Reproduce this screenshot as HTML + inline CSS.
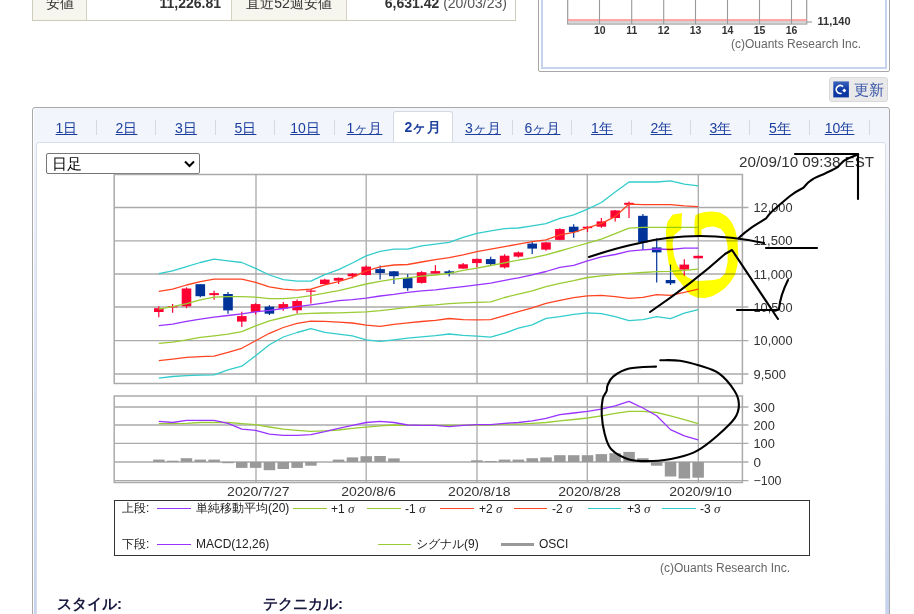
<!DOCTYPE html>
<html lang="ja">
<head>
<meta charset="utf-8">
<style>
html,body{margin:0;padding:0;background:#fff;}
body{width:914px;height:614px;position:relative;overflow:hidden;font-family:"Liberation Sans",sans-serif;color:#333;}
.abs{position:absolute;}
/* top table */
#tbl{left:32px;top:-19px;width:484px;height:40px;border-left:1px solid #cfcbb9;border-bottom:1px solid #cfcbb9;border-right:1px solid #cfcbb9;box-sizing:border-box;}
.th{position:absolute;top:0;height:39px;background:#f7f6ee;border-right:1px solid #d6d2c2;box-sizing:border-box;font-size:14px;line-height:14px;text-align:center;}
.td{position:absolute;top:0;height:39px;border-right:1px solid #d6d2c2;box-sizing:border-box;font-size:14px;line-height:14px;text-align:right;}
/* mini box */
#mini{left:538px;top:-10px;width:352px;height:82px;border:1px solid #a8a8a8;box-sizing:border-box;border-radius:2px;}
#mini .in{position:absolute;left:2px;top:0;right:2px;bottom:2px;border:2px solid #c6d3ee;border-top:none;}
/* update button */
#upd{left:829px;top:77px;width:59px;height:25px;background:#e9e9e9;border:1px solid #d9d9d9;box-sizing:border-box;border-radius:3px;}
/* main panel */
#panel{left:32px;top:107px;width:858px;height:540px;border:1px solid #a9a9a9;box-sizing:border-box;border-radius:3px;background:linear-gradient(to bottom,#f2f5fb 0px,#f2f5fb 35px,#e4eaf8 150px,#c7d4ef 500px);box-shadow:inset 1px 0 0 #fff;}
#inner{left:36px;top:142px;width:850px;height:520px;border:1px solid #d9dfea;box-sizing:border-box;border-radius:3px;background:#fff;}
.tab{position:absolute;top:111px;height:31px;font-size:14px;color:#1c3f9e;text-align:center;}
.tab span{text-decoration:underline;text-underline-offset:1px;}
.sep{position:absolute;top:120px;width:1px;height:15px;background:#d5d9e2;}
#act{left:393px;top:111px;width:60px;height:32px;background:#fff;border:1px solid #d5d9e2;border-bottom:none;box-sizing:border-box;border-radius:3px 3px 0 0;}
#sel{left:46px;top:153px;width:154px;height:21px;border:1px solid #767676;box-sizing:border-box;border-radius:2px;background:#fff;font-size:15px;line-height:19px;color:#000;}
.ax{font-family:"Liberation Sans",sans-serif;font-size:12.5px;fill:#333;}
.lg{position:absolute;font-size:12px;line-height:13px;color:#222;white-space:nowrap;}
.lg i{font-family:"Liberation Serif",serif;font-size:13px;}
.ll{position:absolute;height:1.5px;}
</style>
</head>
<body>
<!-- top table -->
<div id="tbl" class="abs">
  <div class="th" style="left:0;width:54px;"><div style="position:absolute;left:0;right:0;top:15px;">安値</div></div>
  <div class="td" style="left:54px;width:145px;"><div style="position:absolute;right:10px;top:15px;font-weight:bold;">11,226.81</div></div>
  <div class="th" style="left:199px;width:115px;"><div style="position:absolute;left:0;right:0;top:15px;">直近52週安値</div></div>
  <div class="td" style="left:314px;width:169px;border-right:none;"><div style="position:absolute;right:9px;top:15px;"><b>6,631.42</b> <span style="color:#555;">(20/03/23)</span></div></div>
</div>

<!-- mini chart box -->
<div id="mini" class="abs"><div class="in"></div></div>
<svg class="abs" style="left:0;top:0;" width="914" height="110">
  <rect x="567.7" y="-5" width="239" height="29" fill="#fff" stroke="#999" stroke-width="1.2"/>
  <rect x="568.3" y="20.8" width="238" height="2" fill="#cfcfcf"/>
  <line x1="567.7" y1="20" x2="806.7" y2="20" stroke="#ff8a8a" stroke-width="1.5"/>
  <g stroke="#999" stroke-width="1.1">
    <line x1="599.5" y1="-5" x2="599.5" y2="24"/><line x1="631.7" y1="-5" x2="631.7" y2="24"/><line x1="663.7" y1="-5" x2="663.7" y2="24"/>
    <line x1="695.5" y1="-5" x2="695.5" y2="24"/><line x1="727.5" y1="-5" x2="727.5" y2="24"/><line x1="759.5" y1="-5" x2="759.5" y2="24"/><line x1="791.5" y1="-5" x2="791.5" y2="24"/>
    <line x1="806.7" y1="22" x2="812" y2="22"/>
  </g>
  <g font-family="Liberation Sans" font-size="10.5" font-weight="bold" fill="#333" text-anchor="middle">
    <text x="599.8" y="34">10</text><text x="631.7" y="34">11</text><text x="663.7" y="34">12</text><text x="695.5" y="34">13</text><text x="727.5" y="34">14</text><text x="759.5" y="34">15</text><text x="791.5" y="34">16</text>
  </g>
  <text x="817.5" y="25" font-family="Liberation Sans" font-size="11" font-weight="bold" fill="#333">11,140</text>
  <text x="731" y="48" font-family="Liberation Sans" font-size="12" fill="#666">(c)Ouants Research Inc.</text>
</svg>

<!-- update button -->
<div id="upd" class="abs">
  <svg class="abs" style="left:3px;top:3px;" width="17" height="17">
    <defs><linearGradient id="ig" x1="0" y1="0" x2="0" y2="1"><stop offset="0" stop-color="#3d64bb"/><stop offset="0.5" stop-color="#0d3aa6"/><stop offset="1" stop-color="#0a35a0"/></linearGradient></defs>
    <rect x="0.3" y="0.4" width="15.6" height="16" fill="url(#ig)"/>
    <path d="M10.1 5.6 A4 4 0 1 0 8.7 12.2" fill="none" stroke="#fff" stroke-width="1.6"/>
    <path d="M11.3 7.6 L13.4 9.6 L11.3 11.6 L9.2 9.6 Z" fill="#fff"/>
  </svg>
  <div class="abs" style="left:24px;top:3px;font-size:15px;line-height:17px;color:#3a56a8;">更新</div>
</div>

<!-- main panel -->
<div id="panel" class="abs"></div>
<div id="act" class="abs"></div>
<div class="tab" style="left:37px;width:59px;"><span style="position:relative;top:9px;">1日</span></div>
<div class="tab" style="left:97px;width:59px;"><span style="position:relative;top:9px;">2日</span></div>
<div class="tab" style="left:156px;width:60px;"><span style="position:relative;top:9px;">3日</span></div>
<div class="tab" style="left:216px;width:59px;"><span style="position:relative;top:9px;">5日</span></div>
<div class="tab" style="left:275px;width:60px;"><span style="position:relative;top:9px;">10日</span></div>
<div class="tab" style="left:335px;width:59px;"><span style="position:relative;top:9px;">1ヶ月</span></div>
<div class="tab" style="left:394px;width:59px;"><b style="position:relative;top:8px;left:-0.5px;">2ヶ<span style="text-decoration:none;margin-left:1px;">月</span></b></div>
<div class="tab" style="left:453px;width:60px;"><span style="position:relative;top:9px;">3ヶ月</span></div>
<div class="tab" style="left:513px;width:59px;"><span style="position:relative;top:9px;">6ヶ月</span></div>
<div class="tab" style="left:572px;width:60px;"><span style="position:relative;top:9px;">1年</span></div>
<div class="tab" style="left:632px;width:59px;"><span style="position:relative;top:9px;">2年</span></div>
<div class="tab" style="left:691px;width:59px;"><span style="position:relative;top:9px;">3年</span></div>
<div class="tab" style="left:750px;width:60px;"><span style="position:relative;top:9px;">5年</span></div>
<div class="tab" style="left:810px;width:59px;"><span style="position:relative;top:9px;">10年</span></div>
<div class="sep" style="left:96px;"></div><div class="sep" style="left:155px;"></div><div class="sep" style="left:215px;"></div>
<div class="sep" style="left:274px;"></div><div class="sep" style="left:334px;"></div>
<div class="sep" style="left:512px;"></div><div class="sep" style="left:571px;"></div><div class="sep" style="left:631px;"></div>
<div class="sep" style="left:690px;"></div><div class="sep" style="left:749px;"></div><div class="sep" style="left:809px;"></div><div class="sep" style="left:869px;"></div>

<div id="inner" class="abs"></div>

<div id="sel" class="abs"><span style="position:absolute;left:5px;top:0;">日足</span>
  <svg class="abs" style="left:137px;top:6px;" width="11" height="8"><path d="M1 1.5 L5.5 6 L10 1.5" fill="none" stroke="#000" stroke-width="2"/></svg>
</div>
<div class="abs" style="left:739px;top:153px;font-size:15.2px;line-height:17px;color:#333;">20/09/10 09:38 EST</div>

<svg class="abs" style="left:0;top:0;" width="914" height="614">
<rect x="114.2" y="174.5" width="628.1999999999999" height="209.0" fill="#fff" stroke="#aaaaaa" stroke-width="1.5"/>
<line x1="114.2" y1="207.5" x2="748.4" y2="207.5" stroke="#aaaaaa" stroke-width="1.3"/>
<line x1="114.2" y1="240.8" x2="748.4" y2="240.8" stroke="#aaaaaa" stroke-width="1.3"/>
<line x1="114.2" y1="274.0" x2="748.4" y2="274.0" stroke="#aaaaaa" stroke-width="1.3"/>
<line x1="114.2" y1="307.0" x2="748.4" y2="307.0" stroke="#aaaaaa" stroke-width="1.3"/>
<line x1="114.2" y1="340.6" x2="748.4" y2="340.6" stroke="#aaaaaa" stroke-width="1.3"/>
<line x1="114.2" y1="374.0" x2="748.4" y2="374.0" stroke="#aaaaaa" stroke-width="1.3"/>
<line x1="256" y1="174.5" x2="256" y2="383.5" stroke="#aaaaaa" stroke-width="1.3"/>
<line x1="366.2" y1="174.5" x2="366.2" y2="383.5" stroke="#aaaaaa" stroke-width="1.3"/>
<line x1="477" y1="174.5" x2="477" y2="383.5" stroke="#aaaaaa" stroke-width="1.3"/>
<line x1="587.3" y1="174.5" x2="587.3" y2="383.5" stroke="#aaaaaa" stroke-width="1.3"/>
<line x1="698.3" y1="174.5" x2="698.3" y2="383.5" stroke="#aaaaaa" stroke-width="1.3"/>
<rect x="114.2" y="396.0" width="628.1999999999999" height="86.5" fill="#fff" stroke="#aaaaaa" stroke-width="1.5"/>
<line x1="114.2" y1="407.0" x2="748.4" y2="407.0" stroke="#aaaaaa" stroke-width="1.3"/>
<line x1="114.2" y1="425.0" x2="748.4" y2="425.0" stroke="#aaaaaa" stroke-width="1.3"/>
<line x1="114.2" y1="443.4" x2="748.4" y2="443.4" stroke="#aaaaaa" stroke-width="1.3"/>
<line x1="114.2" y1="462.0" x2="748.4" y2="462.0" stroke="#aaaaaa" stroke-width="1.3"/>
<line x1="114.2" y1="480.7" x2="748.4" y2="480.7" stroke="#aaaaaa" stroke-width="1.3"/>
<line x1="256" y1="396.0" x2="256" y2="482.5" stroke="#aaaaaa" stroke-width="1.3"/>
<line x1="366.2" y1="396.0" x2="366.2" y2="482.5" stroke="#aaaaaa" stroke-width="1.3"/>
<line x1="477" y1="396.0" x2="477" y2="482.5" stroke="#aaaaaa" stroke-width="1.3"/>
<line x1="587.3" y1="396.0" x2="587.3" y2="482.5" stroke="#aaaaaa" stroke-width="1.3"/>
<line x1="698.3" y1="396.0" x2="698.3" y2="482.5" stroke="#aaaaaa" stroke-width="1.3"/>
<line x1="158.8" y1="306.3" x2="158.8" y2="317.2" stroke="#ff0033" stroke-width="1.2"/>
<rect x="154.0" y="308.2" width="9.6" height="3.8" fill="#ff0033"/>
<line x1="172.6" y1="303.9" x2="172.6" y2="312.8" stroke="#ff0033" stroke-width="1.2"/>
<rect x="167.8" y="306.2" width="9.6" height="1.2" fill="#ff0033"/>
<line x1="186.5" y1="287.4" x2="186.5" y2="308.2" stroke="#ff0033" stroke-width="1.2"/>
<rect x="181.7" y="288.5" width="9.6" height="17.8" fill="#ff0033"/>
<line x1="200.3" y1="284.2" x2="200.3" y2="297.3" stroke="#003399" stroke-width="1.2"/>
<rect x="195.5" y="284.2" width="9.6" height="12.0" fill="#003399"/>
<line x1="214.1" y1="290.7" x2="214.1" y2="299.7" stroke="#ff0033" stroke-width="1.2"/>
<rect x="209.3" y="293.1" width="9.6" height="2.0" fill="#ff0033"/>
<line x1="228.0" y1="292.0" x2="228.0" y2="313.7" stroke="#003399" stroke-width="1.2"/>
<rect x="223.2" y="294.0" width="9.6" height="16.4" fill="#003399"/>
<line x1="241.8" y1="311.7" x2="241.8" y2="327.0" stroke="#ff0033" stroke-width="1.2"/>
<rect x="237.0" y="316.1" width="9.6" height="5.5" fill="#ff0033"/>
<line x1="255.6" y1="303.2" x2="255.6" y2="314.6" stroke="#ff0033" stroke-width="1.2"/>
<rect x="250.8" y="304.1" width="9.6" height="7.8" fill="#ff0033"/>
<line x1="269.4" y1="305.2" x2="269.4" y2="314.9" stroke="#003399" stroke-width="1.2"/>
<rect x="264.6" y="306.6" width="9.6" height="7.1" fill="#003399"/>
<line x1="283.3" y1="301.9" x2="283.3" y2="310.7" stroke="#ff0033" stroke-width="1.2"/>
<rect x="278.5" y="304.1" width="9.6" height="4.5" fill="#ff0033"/>
<line x1="297.1" y1="299.6" x2="297.1" y2="313.4" stroke="#ff0033" stroke-width="1.2"/>
<rect x="292.3" y="301.0" width="9.6" height="9.3" fill="#ff0033"/>
<line x1="310.9" y1="289.0" x2="310.9" y2="303.5" stroke="#ff0033" stroke-width="1.2"/>
<rect x="306.1" y="290.5" width="9.6" height="1.2" fill="#ff0033"/>
<line x1="324.8" y1="278.8" x2="324.8" y2="284.5" stroke="#ff0033" stroke-width="1.2"/>
<rect x="320.0" y="279.6" width="9.6" height="4.5" fill="#ff0033"/>
<line x1="338.6" y1="277.5" x2="338.6" y2="284.1" stroke="#ff0033" stroke-width="1.2"/>
<rect x="333.8" y="277.9" width="9.6" height="2.8" fill="#ff0033"/>
<line x1="352.4" y1="273.0" x2="352.4" y2="278.6" stroke="#ff0033" stroke-width="1.2"/>
<rect x="347.6" y="273.6" width="9.6" height="2.7" fill="#ff0033"/>
<line x1="366.2" y1="265.4" x2="366.2" y2="275.5" stroke="#ff0033" stroke-width="1.2"/>
<rect x="361.4" y="266.6" width="9.6" height="8.4" fill="#ff0033"/>
<line x1="380.1" y1="265.6" x2="380.1" y2="279.6" stroke="#003399" stroke-width="1.2"/>
<rect x="375.3" y="269.1" width="9.6" height="3.9" fill="#003399"/>
<line x1="393.9" y1="271.0" x2="393.9" y2="284.1" stroke="#003399" stroke-width="1.2"/>
<rect x="389.1" y="271.3" width="9.6" height="4.9" fill="#003399"/>
<line x1="407.7" y1="274.3" x2="407.7" y2="290.7" stroke="#003399" stroke-width="1.2"/>
<rect x="402.9" y="278.1" width="9.6" height="10.1" fill="#003399"/>
<line x1="421.6" y1="271.3" x2="421.6" y2="283.5" stroke="#ff0033" stroke-width="1.2"/>
<rect x="416.8" y="272.2" width="9.6" height="10.7" fill="#ff0033"/>
<line x1="435.4" y1="265.3" x2="435.4" y2="273.8" stroke="#ff0033" stroke-width="1.2"/>
<rect x="430.6" y="271.1" width="9.6" height="2.4" fill="#ff0033"/>
<line x1="449.2" y1="269.9" x2="449.2" y2="276.6" stroke="#003399" stroke-width="1.2"/>
<rect x="444.4" y="271.3" width="9.6" height="2.0" fill="#003399"/>
<line x1="463.1" y1="263.1" x2="463.1" y2="268.8" stroke="#ff0033" stroke-width="1.2"/>
<rect x="458.3" y="264.3" width="9.6" height="4.3" fill="#ff0033"/>
<line x1="476.9" y1="258.5" x2="476.9" y2="267.5" stroke="#ff0033" stroke-width="1.2"/>
<rect x="472.1" y="258.9" width="9.6" height="4.2" fill="#ff0033"/>
<line x1="490.7" y1="256.8" x2="490.7" y2="265.3" stroke="#003399" stroke-width="1.2"/>
<rect x="485.9" y="259.1" width="9.6" height="5.0" fill="#003399"/>
<line x1="504.6" y1="254.3" x2="504.6" y2="268.6" stroke="#ff0033" stroke-width="1.2"/>
<rect x="499.8" y="255.7" width="9.6" height="11.7" fill="#ff0033"/>
<line x1="518.4" y1="251.6" x2="518.4" y2="257.4" stroke="#ff0033" stroke-width="1.2"/>
<rect x="513.6" y="252.4" width="9.6" height="4.2" fill="#ff0033"/>
<line x1="532.2" y1="241.6" x2="532.2" y2="254.1" stroke="#003399" stroke-width="1.2"/>
<rect x="527.4" y="243.6" width="9.6" height="5.0" fill="#003399"/>
<line x1="546.0" y1="242.0" x2="546.0" y2="250.7" stroke="#ff0033" stroke-width="1.2"/>
<rect x="541.2" y="242.4" width="9.6" height="7.2" fill="#ff0033"/>
<line x1="559.9" y1="228.3" x2="559.9" y2="240.2" stroke="#ff0033" stroke-width="1.2"/>
<rect x="555.1" y="229.1" width="9.6" height="10.8" fill="#ff0033"/>
<line x1="573.7" y1="224.3" x2="573.7" y2="237.8" stroke="#003399" stroke-width="1.2"/>
<rect x="568.9" y="226.7" width="9.6" height="5.4" fill="#003399"/>
<line x1="587.5" y1="226.2" x2="587.5" y2="232.1" stroke="#ff0033" stroke-width="1.2"/>
<rect x="582.7" y="226.7" width="9.6" height="1.5" fill="#ff0033"/>
<line x1="601.4" y1="218.0" x2="601.4" y2="227.7" stroke="#ff0033" stroke-width="1.2"/>
<rect x="596.6" y="221.4" width="9.6" height="5.3" fill="#ff0033"/>
<line x1="615.2" y1="210.0" x2="615.2" y2="221.4" stroke="#ff0033" stroke-width="1.2"/>
<rect x="610.4" y="210.4" width="9.6" height="7.6" fill="#ff0033"/>
<line x1="629.0" y1="201.6" x2="629.0" y2="218.0" stroke="#ff0033" stroke-width="1.2"/>
<rect x="624.2" y="202.8" width="9.6" height="2.0" fill="#ff0033"/>
<line x1="642.9" y1="214.1" x2="642.9" y2="249.9" stroke="#003399" stroke-width="1.2"/>
<rect x="638.1" y="215.8" width="9.6" height="26.6" fill="#003399"/>
<line x1="656.7" y1="238.2" x2="656.7" y2="282.4" stroke="#003399" stroke-width="1.2"/>
<rect x="651.9" y="247.4" width="9.6" height="5.0" fill="#003399"/>
<line x1="670.5" y1="264.6" x2="670.5" y2="285.0" stroke="#003399" stroke-width="1.2"/>
<rect x="665.7" y="280.0" width="9.6" height="3.3" fill="#003399"/>
<line x1="684.3" y1="259.2" x2="684.3" y2="275.8" stroke="#ff0033" stroke-width="1.2"/>
<rect x="679.5" y="264.6" width="9.6" height="5.0" fill="#ff0033"/>
<line x1="698.2" y1="255.8" x2="698.2" y2="258.3" stroke="#ff0033" stroke-width="1.2"/>
<rect x="693.4" y="255.8" width="9.6" height="2.5" fill="#ff0033"/>
<polyline points="158.8,273.6 172.6,270.8 186.5,266.6 200.3,262.5 214.1,259.2 228.0,260.8 241.8,262.5 255.6,268.3 269.4,275.0 283.3,279.6 297.1,281.2 310.9,281.2 324.8,274.6 338.6,269.6 352.4,263.0 366.2,255.8 380.1,251.3 393.9,249.1 407.7,249.1 421.6,245.8 435.4,244.1 449.2,242.4 463.1,237.4 476.9,233.3 490.7,230.8 504.6,228.6 518.4,228.0 532.2,225.8 546.0,223.6 559.9,218.3 573.7,214.9 587.5,209.1 601.4,202.5 615.2,192.0 629.0,182.0 642.9,182.0 656.7,182.0 670.5,180.8 684.3,184.2 698.2,185.8" fill="none" stroke="#33cccc" stroke-width="1.3" stroke-linejoin="round"/>
<polyline points="158.8,378.2 172.6,376.5 186.5,375.7 200.3,375.2 214.1,374.9 228.0,369.9 241.8,366.2 255.6,355.7 269.4,344.8 283.3,337.0 297.1,332.5 310.9,328.6 324.8,332.4 338.6,334.1 352.4,335.8 366.2,339.9 380.1,341.4 393.9,339.9 407.7,338.2 421.6,336.9 435.4,335.7 449.2,334.0 463.1,335.4 476.9,336.1 490.7,337.1 504.6,333.2 518.4,328.2 532.2,324.9 546.0,318.3 559.9,316.6 573.7,314.3 587.5,312.9 601.4,313.6 615.2,316.6 629.0,320.7 642.9,319.6 656.7,316.6 670.5,318.6 684.3,313.2 698.2,309.6" fill="none" stroke="#33cccc" stroke-width="1.3" stroke-linejoin="round"/>
<polyline points="158.8,291.3 172.6,289.1 186.5,285.0 200.3,281.6 214.1,279.1 228.0,279.1 241.8,279.1 255.6,282.4 269.4,286.9 283.3,289.1 297.1,290.1 310.9,289.1 324.8,284.9 338.6,281.6 352.4,277.4 366.2,270.8 380.1,266.8 393.9,265.0 407.7,264.5 421.6,262.0 435.4,259.6 449.2,257.7 463.1,254.8 476.9,251.6 490.7,249.1 504.6,246.6 518.4,244.1 532.2,241.6 546.0,239.9 559.9,234.9 573.7,232.4 587.5,227.9 601.4,223.3 615.2,216.6 629.0,204.1 642.9,204.6 656.7,204.6 670.5,204.6 684.3,205.8 698.2,206.6" fill="none" stroke="#ff4422" stroke-width="1.3" stroke-linejoin="round"/>
<polyline points="158.8,360.7 172.6,359.1 186.5,357.4 200.3,356.6 214.1,356.2 228.0,352.4 241.8,348.3 255.6,340.8 269.4,333.3 283.3,327.5 297.1,323.3 310.9,321.1 324.8,321.3 338.6,322.1 352.4,323.0 366.2,325.1 380.1,326.3 393.9,324.3 407.7,322.9 421.6,321.5 435.4,320.3 449.2,318.5 463.1,319.6 476.9,319.9 490.7,319.7 504.6,315.6 518.4,311.6 532.2,307.9 546.0,303.3 559.9,300.3 573.7,297.6 587.5,295.8 601.4,295.3 615.2,296.6 629.0,298.3 642.9,297.4 656.7,294.6 670.5,295.3 684.3,292.4 698.2,289.1" fill="none" stroke="#ff4422" stroke-width="1.3" stroke-linejoin="round"/>
<polyline points="158.8,309.0 172.6,306.6 186.5,303.6 200.3,299.9 214.1,297.1 228.0,296.6 241.8,296.6 255.6,297.1 269.4,298.6 283.3,298.6 297.1,297.6 310.9,295.7 324.8,293.2 338.6,290.7 352.4,287.4 366.2,284.0 380.1,281.3 393.9,279.2 407.7,277.8 421.6,276.2 435.4,275.0 449.2,273.3 463.1,270.3 476.9,268.1 490.7,265.5 504.6,262.8 518.4,260.2 532.2,257.9 546.0,254.9 559.9,251.0 573.7,247.0 587.5,243.2 601.4,239.1 615.2,233.6 629.0,228.2 642.9,227.4 656.7,227.4 670.5,227.4 684.3,227.4 698.2,227.4" fill="none" stroke="#99cc33" stroke-width="1.3" stroke-linejoin="round"/>
<polyline points="158.8,343.3 172.6,342.1 186.5,339.9 200.3,337.4 214.1,335.8 228.0,334.1 241.8,331.6 255.6,325.8 269.4,320.8 283.3,317.5 297.1,314.1 310.9,313.3 324.8,313.0 338.6,312.8 352.4,312.4 366.2,311.9 380.1,310.7 393.9,309.1 407.7,307.4 421.6,305.7 435.4,304.9 449.2,303.6 463.1,302.9 476.9,302.4 490.7,301.9 504.6,297.5 518.4,294.1 532.2,290.8 546.0,286.6 559.9,283.3 573.7,280.6 587.5,277.5 601.4,275.8 615.2,274.6 629.0,273.3 642.9,272.5 656.7,271.6 670.5,271.3 684.3,270.3 698.2,269.1" fill="none" stroke="#99cc33" stroke-width="1.3" stroke-linejoin="round"/>
<polyline points="158.8,325.6 172.6,324.1 186.5,321.4 200.3,319.1 214.1,317.2 228.0,315.5 241.8,313.9 255.6,311.8 269.4,310.4 283.3,308.5 297.1,306.6 310.9,304.9 324.8,302.9 338.6,300.7 352.4,299.6 366.2,298.1 380.1,296.0 393.9,294.4 407.7,292.4 421.6,290.8 435.4,289.8 449.2,288.2 463.1,286.6 476.9,284.9 490.7,283.2 504.6,280.3 518.4,277.9 532.2,274.9 546.0,271.5 559.9,267.4 573.7,265.3 587.5,260.8 601.4,256.8 615.2,254.5 629.0,251.2 642.9,249.9 656.7,249.0 670.5,249.5 684.3,248.2 698.2,248.2" fill="none" stroke="#9933ff" stroke-width="1.3" stroke-linejoin="round"/>
<rect x="153.1" y="459.6" width="11.5" height="2.4" fill="#999"/>
<rect x="166.9" y="460.7" width="11.5" height="1.3" fill="#999"/>
<rect x="180.7" y="458.2" width="11.5" height="3.8" fill="#999"/>
<rect x="194.5" y="459.6" width="11.5" height="2.4" fill="#999"/>
<rect x="208.4" y="459.6" width="11.5" height="2.4" fill="#999"/>
<rect x="222.2" y="462.0" width="11.5" height="1.2" fill="#999"/>
<rect x="236.0" y="462.0" width="11.5" height="5.9" fill="#999"/>
<rect x="249.9" y="462.0" width="11.5" height="5.9" fill="#999"/>
<rect x="263.7" y="462.0" width="11.5" height="8.2" fill="#999"/>
<rect x="277.5" y="462.0" width="11.5" height="7.0" fill="#999"/>
<rect x="291.4" y="462.0" width="11.5" height="5.9" fill="#999"/>
<rect x="305.2" y="462.0" width="11.5" height="3.7" fill="#999"/>
<rect x="332.8" y="459.6" width="11.5" height="2.4" fill="#999"/>
<rect x="346.7" y="457.4" width="11.5" height="4.6" fill="#999"/>
<rect x="360.5" y="456.2" width="11.5" height="5.8" fill="#999"/>
<rect x="374.3" y="456.0" width="11.5" height="6.0" fill="#999"/>
<rect x="388.2" y="458.4" width="11.5" height="3.6" fill="#999"/>
<rect x="471.1" y="460.3" width="11.5" height="1.7" fill="#999"/>
<rect x="485.0" y="461.0" width="11.5" height="1.0" fill="#999"/>
<rect x="498.8" y="459.6" width="11.5" height="2.4" fill="#999"/>
<rect x="512.6" y="459.6" width="11.5" height="2.4" fill="#999"/>
<rect x="526.5" y="458.2" width="11.5" height="3.8" fill="#999"/>
<rect x="540.3" y="457.4" width="11.5" height="4.6" fill="#999"/>
<rect x="554.1" y="455.2" width="11.5" height="6.8" fill="#999"/>
<rect x="568.0" y="455.2" width="11.5" height="6.8" fill="#999"/>
<rect x="581.8" y="455.2" width="11.5" height="6.8" fill="#999"/>
<rect x="595.6" y="454.1" width="11.5" height="7.9" fill="#999"/>
<rect x="609.4" y="453.2" width="11.5" height="8.8" fill="#999"/>
<rect x="623.3" y="451.9" width="11.5" height="10.1" fill="#999"/>
<rect x="637.1" y="458.2" width="11.5" height="3.8" fill="#999"/>
<rect x="650.9" y="462.0" width="11.5" height="3.7" fill="#999"/>
<rect x="664.8" y="462.0" width="11.5" height="14.5" fill="#999"/>
<rect x="678.6" y="462.0" width="11.5" height="16.5" fill="#999"/>
<rect x="692.4" y="462.0" width="11.5" height="15.7" fill="#999"/>
<polyline points="158.8,423.6 172.6,423.6 186.5,423.3 200.3,422.5 214.1,422.5 228.0,422.5 241.8,423.6 255.6,424.6 269.4,427.0 283.3,429.1 297.1,430.3 310.9,431.3 324.8,430.8 338.6,430.0 352.4,428.3 366.2,427.1 380.1,425.8 393.9,425.0 407.7,425.3 421.6,425.3 435.4,425.3 449.2,425.3 463.1,425.3 476.9,425.0 490.7,425.0 504.6,424.1 518.4,424.1 532.2,423.3 546.0,422.5 559.9,420.8 573.7,419.5 587.5,418.0 601.4,415.8 615.2,413.3 629.0,411.3 642.9,411.3 656.7,412.5 670.5,415.8 684.3,419.6 698.2,423.6" fill="none" stroke="#99cc33" stroke-width="1.3" stroke-linejoin="round"/>
<polyline points="158.8,421.3 172.6,422.5 186.5,420.3 200.3,420.3 214.1,420.3 228.0,423.3 241.8,429.1 255.6,430.3 269.4,434.1 283.3,435.4 297.1,435.4 310.9,434.6 324.8,431.6 338.6,428.3 352.4,425.4 366.2,422.5 380.1,421.3 393.9,422.5 407.7,425.0 421.6,425.3 435.4,425.4 449.2,426.6 463.1,425.3 476.9,424.6 490.7,424.6 504.6,423.3 518.4,422.5 532.2,420.8 546.0,418.3 559.9,414.6 573.7,413.0 587.5,411.3 601.4,409.1 615.2,405.8 629.0,401.3 642.9,408.0 656.7,415.8 670.5,429.6 684.3,435.8 698.2,439.9" fill="none" stroke="#9933ff" stroke-width="1.3" stroke-linejoin="round"/>
<text x="753.5" y="212.0" class="ax" textLength="39.0" lengthAdjust="spacingAndGlyphs">12,000</text>
<text x="753.5" y="245.3" class="ax" textLength="39.0" lengthAdjust="spacingAndGlyphs">11,500</text>
<text x="753.5" y="278.5" class="ax" textLength="39.0" lengthAdjust="spacingAndGlyphs">11,000</text>
<text x="753.5" y="311.5" class="ax" textLength="39.0" lengthAdjust="spacingAndGlyphs">10,500</text>
<text x="753.5" y="345.1" class="ax" textLength="39.0" lengthAdjust="spacingAndGlyphs">10,000</text>
<text x="753.5" y="378.5" class="ax" textLength="32.5" lengthAdjust="spacingAndGlyphs">9,500</text>
<text x="753.5" y="411.5" class="ax" textLength="21.3" lengthAdjust="spacingAndGlyphs">300</text>
<text x="753.5" y="429.5" class="ax" textLength="21.3" lengthAdjust="spacingAndGlyphs">200</text>
<text x="753.5" y="447.9" class="ax" textLength="21.3" lengthAdjust="spacingAndGlyphs">100</text>
<text x="753.5" y="466.5" class="ax" textLength="7.5" lengthAdjust="spacingAndGlyphs">0</text>
<text x="753.5" y="485.2" class="ax" textLength="28.0" lengthAdjust="spacingAndGlyphs">−100</text>
<text x="227.1" y="496" class="ax" textLength="62.5" lengthAdjust="spacingAndGlyphs">2020/7/27</text>
<text x="341.2" y="496" class="ax" textLength="54.6" lengthAdjust="spacingAndGlyphs">2020/8/6</text>
<text x="448.1" y="496" class="ax" textLength="62.5" lengthAdjust="spacingAndGlyphs">2020/8/18</text>
<text x="558.3" y="496" class="ax" textLength="62.5" lengthAdjust="spacingAndGlyphs">2020/8/28</text>
<text x="669.3" y="496" class="ax" textLength="62.5" lengthAdjust="spacingAndGlyphs">2020/9/10</text>
</svg>

<!-- legend -->
<div class="abs" style="left:113.5px;top:499.5px;width:696px;height:56px;border:1px solid #333;box-sizing:border-box;background:#fff;"></div>
<div class="lg" style="left:122px;top:502px;">上段:</div>
<div class="ll" style="left:157px;top:507.5px;width:34px;background:#9933ff;"></div>
<div class="lg" style="left:196px;top:502px;">単純移動平均(20)</div>
<div class="ll" style="left:293px;top:507.5px;width:34px;background:#99cc33;"></div>
<div class="lg" style="left:331px;top:502px;">+1 <i>σ</i></div>
<div class="ll" style="left:367px;top:507.5px;width:34px;background:#99cc33;"></div>
<div class="lg" style="left:405px;top:502px;">-1 <i>σ</i></div>
<div class="ll" style="left:440px;top:507.5px;width:34px;background:#ff4422;"></div>
<div class="lg" style="left:479px;top:502px;">+2 <i>σ</i></div>
<div class="ll" style="left:514px;top:507.5px;width:33px;background:#ff4422;"></div>
<div class="lg" style="left:552px;top:502px;">-2 <i>σ</i></div>
<div class="ll" style="left:588px;top:507.5px;width:33px;background:#33cccc;"></div>
<div class="lg" style="left:627px;top:502px;">+3 <i>σ</i></div>
<div class="ll" style="left:662px;top:507.5px;width:34px;background:#33cccc;"></div>
<div class="lg" style="left:700px;top:502px;">-3 <i>σ</i></div>

<div class="lg" style="left:122px;top:538px;">下段:</div>
<div class="ll" style="left:157px;top:543.5px;width:34px;background:#9933ff;"></div>
<div class="lg" style="left:196px;top:538px;">MACD(12,26)</div>
<div class="ll" style="left:378px;top:543.5px;width:33px;background:#99cc33;"></div>
<div class="lg" style="left:416px;top:538px;">シグナル(9)</div>
<div class="ll" style="left:501px;top:543px;width:33px;height:3px;background:#999;"></div>
<div class="lg" style="left:539px;top:538px;">OSCI</div>

<div class="abs" style="left:660px;top:561px;font-size:12px;line-height:14px;color:#666;">(c)Ouants Research Inc.</div>

<div class="abs" style="left:57px;top:595px;font-size:15px;line-height:17px;font-weight:bold;color:#1a1a40;">スタイル:</div>
<div class="abs" style="left:263px;top:595px;font-size:15px;line-height:17px;font-weight:bold;color:#1a1a40;">テクニカル:</div>

<!-- annotations -->
<svg class="abs" style="left:0;top:0;mix-blend-mode:multiply;" width="914" height="614">
  <path d="M682 213 L672.5 214.7 L667.4 222 L665.9 230.8 L666.6 248.4 L668.8 264.5 L674 274.7 L681.3 283.5 L686 290 L690 294.5 L697.5 297.8 L705 298 L712.1 296.2 L719 292.5 L725.1 288 L730.5 282 L735 275 L737.5 265 L738.2 253.9 L737.5 240 L735 229.4 L731.5 222 L726.8 216.4 L720 212.5 L712.1 211.5 L705 212 L699.1 213.5 L695.5 215 L694.5 221.3 L694.5 232 L694.8 236.5 L701.5 236.5 L701.5 229.4 L707 227 L714 226.5 L721 229 L725.1 234.3 L727.6 245.7 L727.6 262 L725.1 273.4 L720 278.5 L713.7 280 L706 280.5 L699 281 L694.4 280.6 L688 277.5 L682.7 273.3 L676.9 264.5 L674 255.7 L672.5 244 L674 235.2 L681.3 229.3 Z" fill="#ffff00"/>
</svg>
<svg class="abs" style="left:0;top:0;" width="914" height="614">
  
  <g fill="none" stroke="#000" stroke-width="2.1" stroke-linecap="round" stroke-linejoin="round">
    <path d="M589 257 C610 250 625 246 640 243 C660 238 680 236 700 236 C725 236 745 239 764 243"/>
    <path d="M650 312 C675 295 705 272 725 254 L732 250 C740 262 752 280 778 319"/>
    <path d="M738.4 238.2 C744 233 748 230 752.1 227.1 C758 223 762 221 765.8 218.6 C768 216 769 214 770.9 212.6 C778 206 784 201 789.7 196.3 C795 192 799 190 803.4 187.8 C806 185 807 183 810.3 180.9 C815 177 819 176 824 174.1 C829 171.5 834 169.5 837.6 167.2 C840 165 842 162 844.5 160.4 C849 157.5 853 156 858.2 154.4"/>
    <path d="M795 154 L858 154 L858 199"/>
    <path d="M766 248 L817 248"/>
    <path d="M737 310 L778 310"/>
    <path d="M788 280 C783 290 780 298 779 309"/>
    <path d="M656.0 366.6 C651.5 366.9 636.2 367.0 629.1 368.6 C622.0 370.2 617.0 373.6 613.4 376.4 C609.8 379.2 608.7 382.8 607.6 385.2 C606.5 387.6 607.4 388.7 606.6 391.0 C605.8 393.3 603.5 394.9 602.7 398.8 C601.9 402.7 601.4 408.6 601.7 414.5 C602.0 420.4 603.1 428.1 604.7 434.0 C606.3 439.9 607.4 445.4 611.5 449.6 C615.6 453.8 622.3 457.5 629.1 459.4 C635.9 461.3 644.4 461.3 652.5 461.0 C660.6 460.7 670.4 459.1 677.9 457.4 C685.4 455.7 690.9 454.2 697.4 450.6 C703.9 447.0 710.8 441.4 717.0 436.0 C723.2 430.6 731.0 423.6 734.6 418.4 C738.2 413.2 738.9 409.3 738.9 404.7 C738.9 400.1 737.9 396.2 734.6 391.0 C731.3 385.8 724.8 377.6 718.9 373.4 C713.0 369.2 705.9 367.7 699.4 365.6 C692.9 363.5 686.4 361.6 679.9 360.7 C673.4 359.8 663.6 360.3 660.3 360.2"/>
  </g>
</svg>
</body>
</html>
